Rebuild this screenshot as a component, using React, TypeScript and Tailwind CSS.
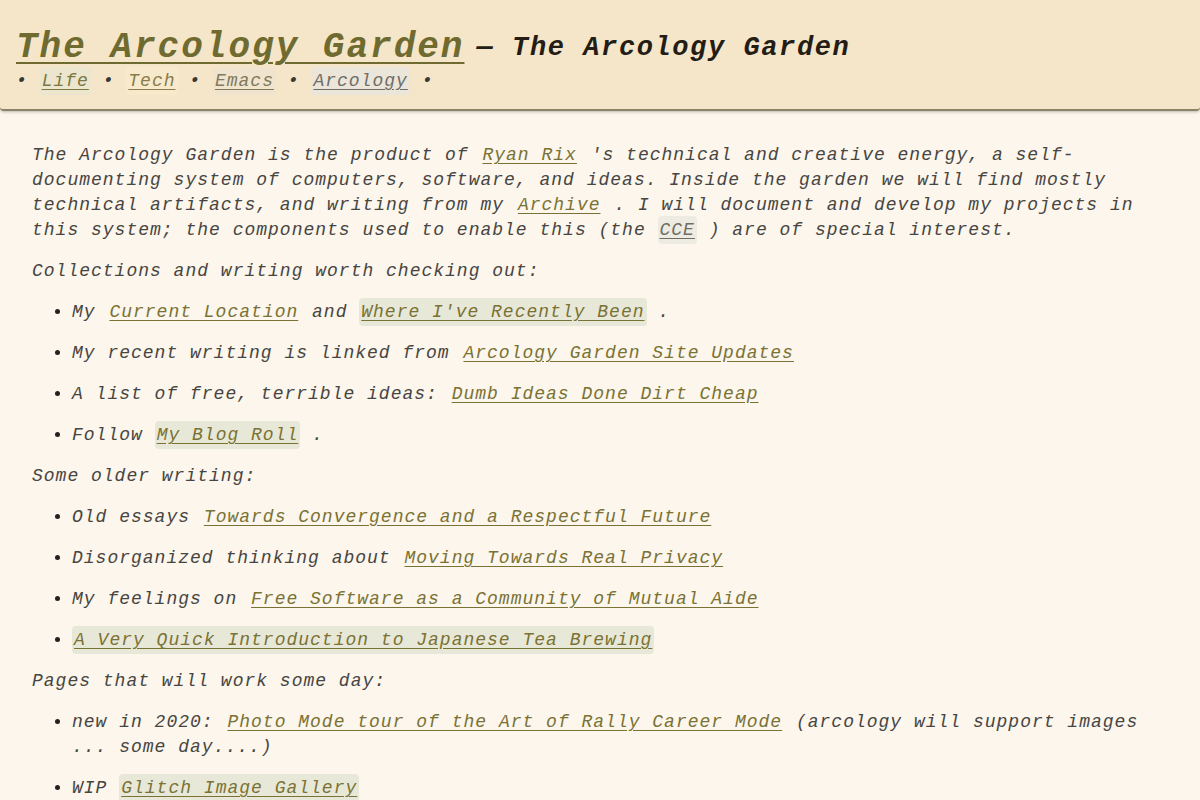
import React from 'react';

type Seg = string | { t: string; hl?: 'green' | 'gray'; gray?: boolean };

const font = { fontFamily: '"Liberation Mono", "DejaVu Sans Mono", monospace' };

const Link: React.FC<{ seg: Exclude<Seg, string> }> = ({ seg }) => {
  const bg =
    seg.hl === 'green' ? 'bg-[#e8e8d8] rounded-sm' : seg.hl === 'gray' ? 'bg-[#eeebe3] rounded-sm' : '';
  const color = seg.gray ? 'text-[#6f6e62] decoration-[#6f6e62]' : 'text-[#7a7234] decoration-[#7a7234]';
  return (
    <a href="#" className={`underline underline-offset-[3px] px-[2px] py-[4px] ${bg} ${color}`}>
      {seg.t}
    </a>
  );
};

const Line: React.FC<{ segs: Seg[] }> = ({ segs }) => (
  <>
    {segs.map((s, i) => (typeof s === 'string' ? <span key={i}>{s}</span> : <Link key={i} seg={s} />))}
  </>
);

const Para: React.FC<{ segs: Seg[] }> = ({ segs }) => (
  <p className="my-4">
    <Line segs={segs} />
  </p>
);

const List: React.FC<{ items: Seg[][] }> = ({ items }) => (
  <ul className="list-disc pl-10 my-4 marker:text-[#222]">
    {items.map((it, i) => (
      <li key={i}>
        <p className="my-4">
          <Line segs={it} />
        </p>
      </li>
    ))}
  </ul>
);

const navItems = [
  { t: 'Life', bg: 'bg-[#ebe6cd]', color: 'text-[#7d7741] decoration-[#7d7741]' },
  { t: 'Tech', bg: 'bg-[#f7e9cc]', color: 'text-[#8a7d4c] decoration-[#8a7d4c]' },
  { t: 'Emacs', bg: 'bg-[#f1e4cf]', color: 'text-[#807a5c] decoration-[#807a5c]' },
  { t: 'Arcology', bg: 'bg-[#ebe5da]', color: 'text-[#6e6d66] decoration-[#6e6d66]' },
];

export default function App() {
  return (
    <div className="min-h-screen bg-[#fcf6ec] text-[#474542] italic" style={font}>
      <header className="bg-[#f6e6c9] border-b-2 border-[#8a8366] rounded-b-[4px] shadow-[0_1px_3px_rgba(0,0,0,0.25)] px-4 pt-[28px] pb-[15px]">
        <h1 className="leading-[40px] flex items-baseline whitespace-nowrap">
          <a
            href="#"
            className="text-[36px] font-bold tracking-[2px] text-[#6f6a2f] underline decoration-2 underline-offset-[5px]"
          >
            The Arcology Garden
          </a>
          <span className="relative -top-[2px] text-[27px] font-bold tracking-[1.6px] text-[#241d16] ml-[12px]">
            — The Arcology Garden
          </span>
        </h1>
        <nav className="-mt-[1px] leading-[25px] text-[18px] tracking-[1px] text-[#3a3835]">
          {navItems.map((n) => (
            <span key={n.t}>
              <span>•</span>{' '}
              <a href="#" className={`underline underline-offset-[3px] px-[2px] py-[4px] rounded-sm ${n.bg} ${n.color}`}>
                {n.t}
              </a>{' '}
            </span>
          ))}
          <span>•</span>
        </nav>
      </header>

      <main className="px-8 pt-[16px] text-[18px] leading-[25px] tracking-[1px]">
        <Para
          segs={[
            'The Arcology Garden is the product of ',
            { t: 'Ryan Rix' },
            " 's technical and creative energy, a self-documenting system of computers, software, and ideas. Inside the garden we will find mostly technical artifacts, and writing from my ",
            { t: 'Archive' },
            ' . I will document and develop my projects in this system; the components used to enable this (the ',
            { t: 'CCE', hl: 'gray', gray: true },
            ' ) are of special interest.',
          ]}
        />
        <Para segs={['Collections and writing worth checking out:']} />
        <List
          items={[
            ['My ', { t: 'Current Location' }, ' and ', { t: "Where I've Recently Been", hl: 'green' }, ' .'],
            ['My recent writing is linked from ', { t: 'Arcology Garden Site Updates' }],
            ['A list of free, terrible ideas: ', { t: 'Dumb Ideas Done Dirt Cheap' }],
            ['Follow ', { t: 'My Blog Roll', hl: 'green' }, ' .'],
          ]}
        />
        <Para segs={['Some older writing:']} />
        <List
          items={[
            ['Old essays ', { t: 'Towards Convergence and a Respectful Future' }],
            ['Disorganized thinking about ', { t: 'Moving Towards Real Privacy' }],
            ['My feelings on ', { t: 'Free Software as a Community of Mutual Aide' }],
            [{ t: 'A Very Quick Introduction to Japanese Tea Brewing', hl: 'green' }],
          ]}
        />
        <Para segs={['Pages that will work some day:']} />
        <List
          items={[
            [
              'new in 2020: ',
              { t: 'Photo Mode tour of the Art of Rally Career Mode' },
              ' (arcology will support images ... some day....)',
            ],
            ['WIP ', { t: 'Glitch Image Gallery', hl: 'green' }],
          ]}
        />
      </main>
    </div>
  );
}
